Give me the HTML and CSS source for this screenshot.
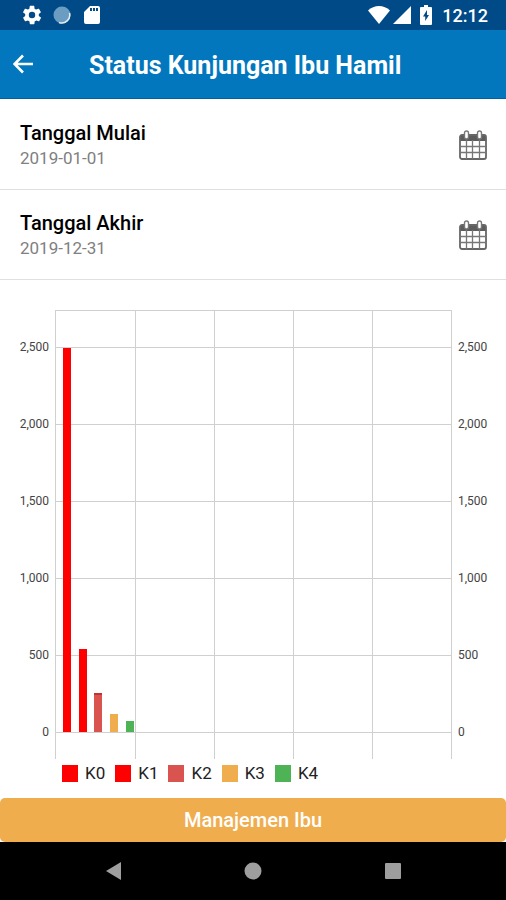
FILE: index.html
```html
<!DOCTYPE html>
<html lang="id">
<head>
  <meta charset="utf-8">
  <meta name="viewport" content="width=device-width, initial-scale=1">
  <title>Status Kunjungan Ibu Hamil</title>
  <link rel="stylesheet" href="styles.css">
</head>
<body>
  <div class="statusbar">
    <svg class="gear" width="22" height="22" viewBox="0 0 24 24"><path d="M19.4 13a7.5 7.5 0 0 0 0-2l2.1-1.6a.5.5 0 0 0 .1-.7l-2-3.4a.5.5 0 0 0-.6-.2l-2.5 1a7.300 7.300 0 0 0-1.700-1L14.500 2.400a.5.5 0 0 0-.5-.4h-4a.5.5 0 0 0-.5.4L9.100 5.100a7.300 7.300 0 0 0-1.700 1l-2.500-1a.5.5 0 0 0-.6.2l-2 3.400a.5.5 0 0 0 .1.700L4.600 11a7.500 7.500 0 0 0 0 2l-2.100 1.600a.5.5 0 0 0-.1.700l2 3.400c.1.200.4.300.6.200l2.500-1a7.300 7.300 0 0 0 1.700 1l.4 2.700c0 .2.200.4.500.4h4c.3 0 .5-.2.5-.4l.4-2.700a7.300 7.300 0 0 0 1.700-1l2.500 1c.2.100.5 0 .6-.2l2-3.400a.5.5 0 0 0-.1-.7zM12 15.500a3.500 3.500 0 1 1 0-7 3.500 3.500 0 0 1 0 7z"/></svg>
    <svg width="18" height="18" viewBox="0 0 18 18"><circle cx="9" cy="9" r="8.500" fill="#6b9cc2"/><path d="M16.500 7A8 8 0 0 1 6 16.500" fill="none" stroke="#e3eef5" stroke-width="1.500"/></svg>
    <svg width="16" height="20" viewBox="0 0 16 20"><path fill-rule="evenodd" d="M6 1h8a2 2 0 0 1 2 2v14a2 2 0 0 1-2 2H2a2 2 0 0 1-2-2V7zM6 3v3h2V3zM9 3v3h2V3zM12 3v3h2V3z"/></svg>
    <div class="right">
      <svg width="22" height="18" viewBox="0 0 22 18"><path d="M0 4.500C6-1.500 16-1.500 22 4.500L11 18z"/></svg>
      <svg width="18" height="18" viewBox="0 0 18 18"><path d="M18 0v18H0z"/></svg>
      <svg class="battery" width="12" height="20" viewBox="0 0 12 20"><path fill-rule="evenodd" d="M4 0h4v2h3a1 1 0 0 1 1 1v16a1 1 0 0 1-1 1H1a1 1 0 0 1-1-1V3a1 1 0 0 1 1-1h3zM7 5l-4 6.500H5.200V16l3.800-6H7z"/></svg>
      <time>12:12</time>
    </div>
  </div>

  <header>
    <button class="back" aria-label="Kembali">
      <svg width="22" height="20" viewBox="0 0 22 20"><path d="M20 10H2M10 1.500L1.500 10l8.500 8.500" fill="none" stroke="#fff" stroke-width="2.600"/></svg>
    </button>
    <h1>Status Kunjungan Ibu Hamil</h1>
  </header>

  <main>
    <div class="date">
      <div class="field">
        <label for="mulai">Tanggal Mulai</label>
        <input type="text" id="mulai" value="2019-01-01" readonly>
      </div>
      <button aria-label="Pilih tanggal mulai">
        <svg width="28" height="30" viewBox="0 0 28 30"><path d="M1 5h26v6H1z" fill="#5c5c5c"/><rect x="1" y="5" width="26" height="24" rx="2" fill="none" stroke="#666" stroke-width="1.800"/><path d="M7.500 10v19M13.500 10v19M20.500 10v19M1 16.500h26M1 22.500h26" stroke="#777" stroke-width="1.300"/><rect x="5.500" y="1" width="4" height="8" rx="2" fill="#fff" stroke="#777" stroke-width="1.400"/><rect x="18.500" y="1" width="4" height="8" rx="2" fill="#fff" stroke="#777" stroke-width="1.400"/></svg>
      </button>
    </div>
    <div class="date">
      <div class="field">
        <label for="akhir">Tanggal Akhir</label>
        <input type="text" id="akhir" value="2019-12-31" readonly>
      </div>
      <button aria-label="Pilih tanggal akhir">
        <svg width="28" height="30" viewBox="0 0 28 30"><path d="M1 5h26v6H1z" fill="#5c5c5c"/><rect x="1" y="5" width="26" height="24" rx="2" fill="none" stroke="#666" stroke-width="1.800"/><path d="M7.500 10v19M13.500 10v19M20.500 10v19M1 16.500h26M1 22.500h26" stroke="#777" stroke-width="1.300"/><rect x="5.500" y="1" width="4" height="8" rx="2" fill="#fff" stroke="#777" stroke-width="1.400"/><rect x="18.500" y="1" width="4" height="8" rx="2" fill="#fff" stroke="#777" stroke-width="1.400"/></svg>
      </button>
    </div>

    <div class="chart">
      <div class="axis left">
        <span>2,500</span><span>2,000</span><span>1,500</span><span>1,000</span><span>500</span><span>0</span>
      </div>
      <div class="plot">
        <div class="lines"><i></i><i></i><i></i><i></i><i></i><i></i></div>
        <div class="cols"><i></i><i></i><i></i><i></i><i></i></div>
        <div class="bars">
          <div class="k0" style="--v:2494"></div>
          <div class="k1" style="--v:540"></div>
          <div class="k2" style="--v:254"></div>
          <div class="k3" style="--v:118"></div>
          <div class="k4" style="--v:72"></div>
        </div>
      </div>
      <div class="axis">
        <span>2,500</span><span>2,000</span><span>1,500</span><span>1,000</span><span>500</span><span>0</span>
      </div>
    </div>
    <ul class="legend">
      <li><i class="k0"></i>K0</li>
      <li><i class="k1"></i>K1</li>
      <li><i class="k2"></i>K2</li>
      <li><i class="k3"></i>K3</li>
      <li><i class="k4"></i>K4</li>
    </ul>
  </main>

  <button class="manage">Manajemen Ibu</button>

  <nav>
    <button aria-label="Kembali"><svg width="18" height="18" viewBox="0 0 18 18"><path d="M17 0v18L2 9z"/></svg></button>
    <button aria-label="Beranda"><svg width="18" height="18" viewBox="0 0 18 18"><circle cx="9" cy="9" r="8.500"/></svg></button>
    <button aria-label="Aplikasi terbaru"><svg width="18" height="18" viewBox="0 0 18 18"><rect x="1" y="1" width="16" height="16" rx="1"/></svg></button>
  </nav>
</body>
</html>
```
FILE: styles.css
```css
* {
    box-sizing: border-box;
    font-family: Roboto, sans-serif;
}
body {
    margin: 0;
    min-height: 100vh;
    display: flex;
    flex-direction: column;
    background-color: white;
}
svg {
    display: block;
}
button {
    background: none;
    border: 0;
    padding: 0;
    cursor: pointer;
}

/* top bars */
.statusbar {
    height: 30px;
    padding: 0 18px 0 21px;
    display: flex;
    align-items: center;
    gap: 10px;
    background-color: #004b87;
    color: white;
    fill: white;
}
.statusbar svg + svg + svg {
    margin-left: 3px;
}
.statusbar .right {
    margin-left: auto;
    display: flex;
    align-items: center;
    gap: 3px;
}
.statusbar .right .battery {
    margin: 0 7px 0 6px;
}
.statusbar time {
    font-size: 18px;
    font-weight: 500;
}
header {
    height: 69px;
    padding: 0 13px;
    display: flex;
    align-items: center;
    background-color: #0277bd;
    border-bottom: 1px solid #0260a4;
}
header h1 {
    margin: 0 0 0 54px;
    padding-top: 3px;
    font-size: 25px;
    font-weight: 700;
    color: white;
    white-space: nowrap;
}

/* date rows */
main {
    flex: 1;
    padding-top: 1px;
}
.date {
    height: 90px;
    padding: 0 19px 0 20px;
    display: flex;
    align-items: center;
    justify-content: space-between;
    border-bottom: 1px solid #e0e0e0;
}
.field {
    display: flex;
    flex-direction: column;
}
.field label {
    font-size: 20px;
    line-height: 26px;
    font-weight: 500;
    color: #000;
}
.field input {
    width: 160px;
    height: 24px;
    padding: 0;
    border: 0;
    outline: none;
    background: none;
    font-size: 17px;
    color: #808080;
}

/* chart */
.chart {
    margin-top: 30px;
    display: grid;
    grid-template-columns: 55px 1fr 54px;
}
.axis {
    padding: 27px 6px 0;
    display: flex;
    flex-direction: column;
    font-size: 12px;
    line-height: 20px;
    color: #444;
}
.axis span {
    height: 77px;
}
.axis span:last-child {
    height: 20px;
}
.left {
    text-align: right;
}
.plot {
    display: grid;
    border: 1px solid #d0d0d0;
    border-bottom: 0;
}
.lines, .cols, .bars {
    grid-area: 1 / 1;
}
.lines {
    padding: 36px 0 26px;
}
.lines i {
    display: block;
    height: 77px;
    border-top: 1px solid #d0d0d0;
}
.lines i:last-child {
    height: 1px;
}
.cols {
    display: grid;
    grid-template-columns: repeat(5, 1fr);
}
.cols i + i {
    border-left: 1px solid #d0d0d0;
}
.bars {
    width: 20%;
    margin: 0 0 27px 3px;
    display: flex;
    align-items: flex-end;
    justify-content: space-around;
}
.bars div {
    width: 8px;
    height: calc(var(--v) * 385px / 2500);
}
.k0, .k1 { background-color: #ff0000; }
.k2 { background-color: #d9534f; }
.k3 { background-color: #f0ad4e; }
.k4 { background-color: #4eb354; }
.bars .k2 {
    border-top: 2px solid #c9302c;
}

.legend {
    list-style: none;
    margin: 4px 0 15px;
    padding: 0 0 0 62px;
    display: flex;
    gap: 10px;
    font-size: 17px;
    line-height: 20px;
    color: #222;
}
.legend li {
    display: flex;
    align-items: center;
    gap: 7px;
}
.legend i {
    width: 16px;
    height: 17px;
}

.manage {
    height: 44px;
    border-radius: 5px;
    background-color: #f0ad4e;
    color: white;
    font-size: 20px;
    font-weight: 500;
}
nav {
    height: 58px;
    padding: 0 43px;
    display: flex;
    background-color: black;
    fill: #9e9e9e;
}
nav button {
    flex: 1;
    display: flex;
    align-items: center;
    justify-content: center;
}
```
